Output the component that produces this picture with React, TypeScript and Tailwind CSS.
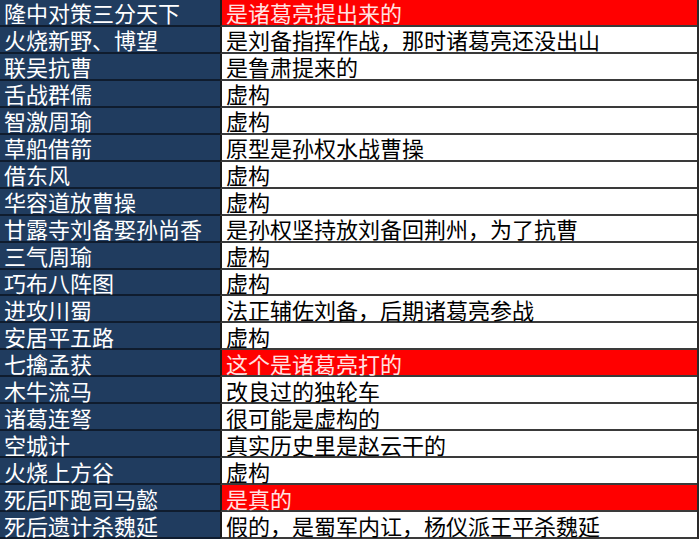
const rows: { name: string; note: string; hot?: boolean }[] = [
  { name: '隆中对策三分天下', note: '是诸葛亮提出来的', hot: true },
  { name: '火烧新野、博望', note: '是刘备指挥作战，那时诸葛亮还没出山' },
  { name: '联吴抗曹', note: '是鲁肃提来的' },
  { name: '舌战群儒', note: '虚构' },
  { name: '智激周瑜', note: '虚构' },
  { name: '草船借箭', note: '原型是孙权水战曹操' },
  { name: '借东风', note: '虚构' },
  { name: '华容道放曹操', note: '虚构' },
  { name: '甘露寺刘备娶孙尚香', note: '是孙权坚持放刘备回荆州，为了抗曹' },
  { name: '三气周瑜', note: '虚构' },
  { name: '巧布八阵图', note: '虚构' },
  { name: '进攻川蜀', note: '法正辅佐刘备，后期诸葛亮参战' },
  { name: '安居平五路', note: '虚构' },
  { name: '七擒孟获', note: '这个是诸葛亮打的', hot: true },
  { name: '木牛流马', note: '改良过的独轮车' },
  { name: '诸葛连弩', note: '很可能是虚构的' },
  { name: '空城计', note: '真实历史里是赵云干的' },
  { name: '火烧上方谷', note: '虚构' },
  { name: '死后吓跑司马懿', note: '是真的', hot: true },
  { name: '死后遗计杀魏延', note: '假的，是蜀军内讧，杨仪派王平杀魏延' },
]

export default function App() {
  return (
    <div className="w-[699px] h-[539px] overflow-hidden bg-white font-['Noto_Sans_CJK_SC',sans-serif]">
      <div className="flex flex-col h-[539px] border-r-2 border-[#2a2a2a]">
        {rows.map((r, i) => (
          <div key={i} className="flex flex-1 min-h-0">
            <div className="w-[220px] shrink-0 flex items-center pl-[4px] bg-[#203c5f] text-white text-[22px] leading-[24px] border-b-2 border-[#0f1c2e] whitespace-nowrap">
              <span>{r.name}</span>
            </div>
            <div
              className={
                r.hot
                  ? 'flex-1 flex items-center pl-[4px] bg-[#ff0000] text-[#ffe2e2] text-[22px] leading-[24px] border-l-2 border-l-[#1a1a1a] border-b-2 border-b-[#3a3a3a] whitespace-nowrap'
                  : 'flex-1 flex items-center pl-[4px] bg-white text-black text-[22px] leading-[24px] border-l-2 border-l-[#1a1a1a] border-b-2 border-b-[#3a3a3a] whitespace-nowrap'
              }
            >
              <span>{r.note}</span>
            </div>
          </div>
        ))}
      </div>
    </div>
  )
}
